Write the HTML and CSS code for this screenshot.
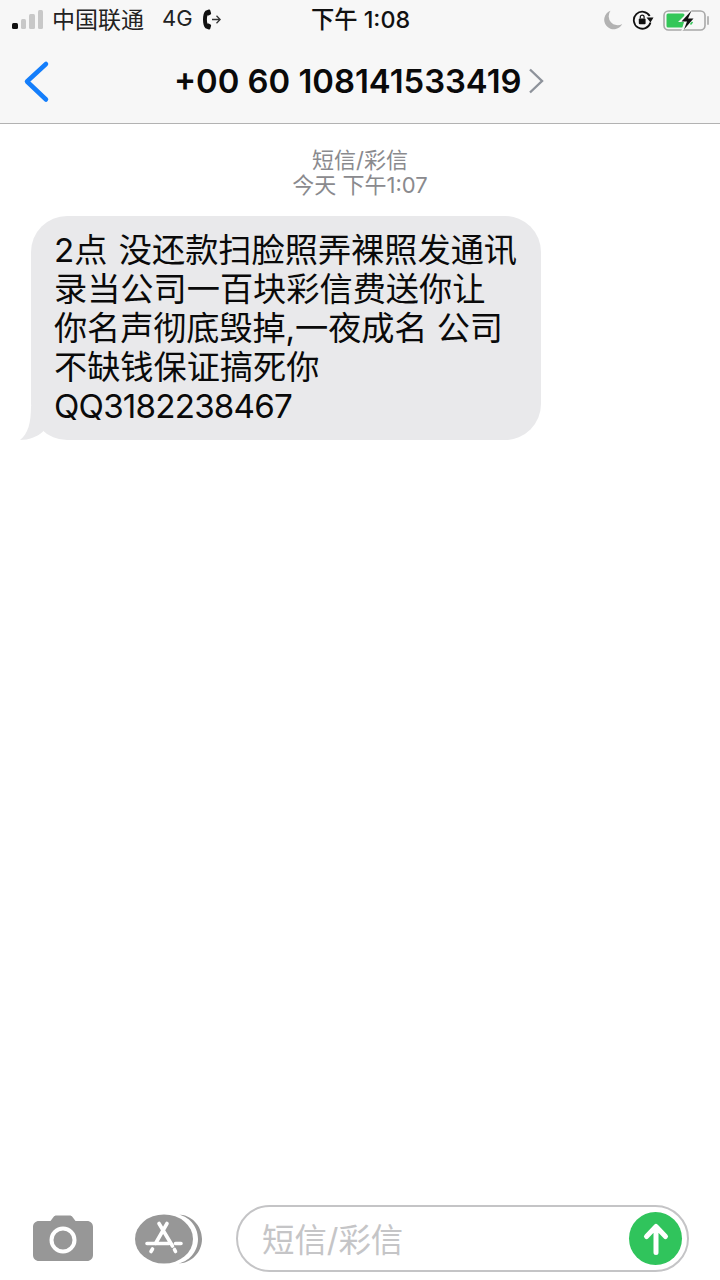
FILE: index.html
```html
<!DOCTYPE html>
<html lang="zh-CN">
<head>
<meta charset="utf-8">
<title>短信</title>
<link rel="stylesheet" href="styles.css">
</head>
<body>
<div class="phone">
  <header class="top">
    <div class="status">
      <div class="status-left">
        <div class="signal"><i class="bar b1"></i><i class="bar b2"></i><i class="bar b3"></i><i class="bar b4"></i></div>
        <span class="carrier">中国联通</span>
        <span class="net">4G</span>
        <svg class="call" width="18" height="21" viewBox="0 0 18 21"><path d="M5.800 .5 2.500 1.800C.8 3.500 0 6.500 0 10.500s.8 7 2.500 8.700l3.300 1.300c.9 0 1.300-.4 1.500-1l.8-2.800c.1-.6-.1-1-.6-1.300l-1.800-.9c-.5-.2-.9-.1-1.200.3-.4-1.300-.6-2.700-.6-4.300s.2-3 .6-4.300c.3.400.7.500 1.200.3l1.800-.9c.5-.3.7-.7.600-1.300L7.300 1.500C7.100.9 6.700.5 5.800.5z" fill="#111"/><path d="M9 10.500h8M13.500 6.800l3.700 3.700-3.700 3.700" fill="none" stroke="#333" stroke-width="1.300"/></svg>
      </div>
      <div class="clock">下午 1:08</div>
      <div class="status-right">
        <svg width="20" height="20" viewBox="0 0 20 20"><path d="M7.500 .8A9.500 9.500 0 1 0 19.200 14 9 9 0 0 1 7.500 .8z" fill="#b2b2b2"/></svg>
        <svg width="22" height="20" viewBox="0 0 22 20"><path d="M17.700 6A8.500 8.500 0 1 0 18.500 12.500" fill="none" stroke="#111" stroke-width="1.800"/><path d="M14.500 7.500 21.500 7.500 18.500 12.500z" fill="#111"/><rect x="6.800" y="8.500" width="6.800" height="5.700" rx="1" fill="#111"/><path d="M8.300 8.500V7a1.900 1.900 0 0 1 3.800 0v1.500" fill="none" stroke="#111" stroke-width="1.200"/></svg>
        <svg width="46" height="22" viewBox="0 0 46 22"><rect x="1" y="2" width="41" height="19" rx="4.500" fill="none" stroke="#a8a8a8" stroke-width="1.600"/><rect x="3.500" y="4.500" width="18" height="14" rx="1.500" fill="#34c759"/><path d="M45 8v7" stroke="#b8b8b8" stroke-width="2" stroke-linecap="round"/><path d="M29 -1 15 13h6L18 23 33 9h-6z" fill="#f7f7f7"/><path d="M28.500 1.500 18.500 12.500h5.500L21 20.500l9.500-11H25z" fill="#111"/><path d="M29.500 13l-2 2.500" stroke="#34c759" stroke-width="1.500"/></svg>
      </div>
    </div>
    <div class="nav">
      <svg class="back" width="28" height="44" viewBox="0 0 28 44"><path d="M24 4 5 21.500 24 39.500" fill="none" stroke="#147efb" stroke-width="4.500" stroke-linecap="round" stroke-linejoin="round"/></svg>
      <div class="title">
        <span class="number">+00 60 108141533419</span>
        <svg width="16" height="28" viewBox="0 0 16 28"><path d="M2 2.500 14 14 2 25.500" fill="none" stroke="#8e939b" stroke-width="2.400"/></svg>
      </div>
    </div>
  </header>

  <main class="thread">
    <div class="meta">
      <div>短信/彩信</div>
      <div>今天 下午1:07</div>
    </div>
    <div class="bubble">
      <svg class="tail" width="34" height="34" viewBox="0 0 34 34"><path d="M12 0C12 17 9 28 1 34 10 34 18 31 24 25.500L34 10V0z" fill="#e9e9eb"/></svg>
      <p class="msg">
        <span class="line wide">2点 没还款扫脸照弄裸照发通讯</span>
        <span class="line">录当公司一百块彩信费送你让</span>
        <span class="line tight">你名声彻底毁掉,一夜成名 公司</span>
        <span class="line">不缺钱保证搞死你</span>
        <span class="line latin">QQ3182238467</span>
      </p>
    </div>
  </main>

  <footer class="composer">
    <svg class="cam" width="60" height="46" viewBox="0 0 60 46"><path d="M6 6h11.500l3-4c.8-1 1.500-1.500 3-1.500h13c1.500 0 2.200.5 3 1.500l3 4H54c3.500 0 6 2.500 6 6v28c0 3.500-2.500 6-6 6H6c-3.500 0-6-2.500-6-6V12c0-3.500 2.500-6 6-6z" fill="#979797"/><circle cx="30" cy="25" r="11.500" fill="none" stroke="#fff" stroke-width="4"/></svg>
    <svg class="store" width="70" height="50" viewBox="0 0 70 50"><path d="M44 .5c10 1.500 20 11 20 24.500s-10 23-20 24.500c13 0 24-11 24-24.500S57 .5 44 .5z" fill="#979797"/><ellipse cx="30" cy="25" rx="29" ry="24.500" fill="#979797"/><path d="M25 9.500 38.500 32M40.500 35.500 41.500 37.500M33 9.500 21.500 29.500M18.500 35 17 37.500M13 29.500H35M41.500 29.500H47" fill="none" stroke="#fff" stroke-width="3.600" stroke-linecap="round"/></svg>
    <div class="input">
      <span class="placeholder">短信/彩信</span>
      <div class="send">
        <svg width="30" height="34" viewBox="0 0 30 34"><path d="M15 30.500V5M5.500 14.500 15 4.500 24.500 14.500" fill="none" stroke="#fff" stroke-width="5" stroke-linecap="round" stroke-linejoin="round"/></svg>
      </div>
    </div>
  </footer>
</div>
</body>
</html>
```

FILE: styles.css
```css
* { box-sizing: border-box; }
html, body { margin: 0; padding: 0; background: #fff; }
body { font-family: Inter, "Noto Sans CJK SC", "Liberation Sans", sans-serif; color: #0a0a0a; }
.phone { width: 720px; height: 1280px; display: flex; flex-direction: column; overflow: hidden; }

.top { background: #f7f7f7; border-bottom: 1px solid #b2b2b2; height: 124px; flex: none; }
.status { height: 40px; display: grid; grid-template-columns: 1fr auto 1fr; align-items: center; padding: 0 11px 4px 12px; }
.status-left { display: flex; align-items: center; }
.signal { display: flex; align-items: flex-end; gap: 3px; height: 19px; margin: 2px 9px 0 0; }
.bar { display: block; width: 5.500px; border-radius: 1.500px; background: #c8c8c8; }
.b1 { height: 6px; background: #111; }
.b2 { height: 10px; }
.b3 { height: 15px; }
.b4 { height: 19px; }
.carrier { font-size: 23px; color: #222; }
.net { font-size: 22px; margin-left: 18px; color: #222; }
.call { margin: 2px 0 0 10px; }
.clock { font-size: 23.300px; font-weight: 500; color: #111; }
.status-right { display: flex; align-items: center; justify-content: flex-end; gap: 9px; margin-top: 4px; }

.nav { height: 82px; display: flex; align-items: center; padding-left: 22px; }
.back { flex: none; margin-top: 1px; }
.title { display: flex; align-items: center; gap: 6px; margin-left: 124px; }
.number { font-size: 32.800px; font-weight: 600; color: #0a0a0a; white-space: nowrap; }

.thread { flex: 1; display: flex; flex-direction: column; padding: 24px 0 0 31px; }
.meta { margin-left: -31px; text-align: center; font-size: 22px; line-height: 25px; color: #8a8a8e; }
.bubble { position: relative; width: 510px; height: 224px; margin-top: 18px; padding: 15px 0 0 23px; background: #e9e9eb; border-radius: 36px; }
.tail { position: absolute; left: -12px; bottom: 0; }
.msg { position: relative; margin: 0; font-size: 33.200px; line-height: 39px; color: #0a0a0a; }
.line { display: block; white-space: nowrap; }
.wide { word-spacing: 2px; }
.tight { letter-spacing: -0.1px; }
.latin { letter-spacing: -0.8px; }

.composer { flex: none; height: 80px; display: flex; align-items: flex-start; padding: 14px 31px 0 33px; }
.cam { margin-top: 1px; flex: none; }
.store { margin-left: 41px; flex: none; }
.input { flex: 1; height: 67px; margin-left: 32px; margin-top: -9px; border: 2px solid #c4c4c6; border-radius: 34px; display: flex; align-items: center; justify-content: space-between; padding: 0 5px 0 24px; background: #fff; }
.placeholder { font-size: 32.400px; color: #c5c5c7; margin-bottom: 3px; }
.send { width: 53px; height: 53px; border-radius: 50%; background: #30c45c; display: flex; align-items: center; justify-content: center; }
```
